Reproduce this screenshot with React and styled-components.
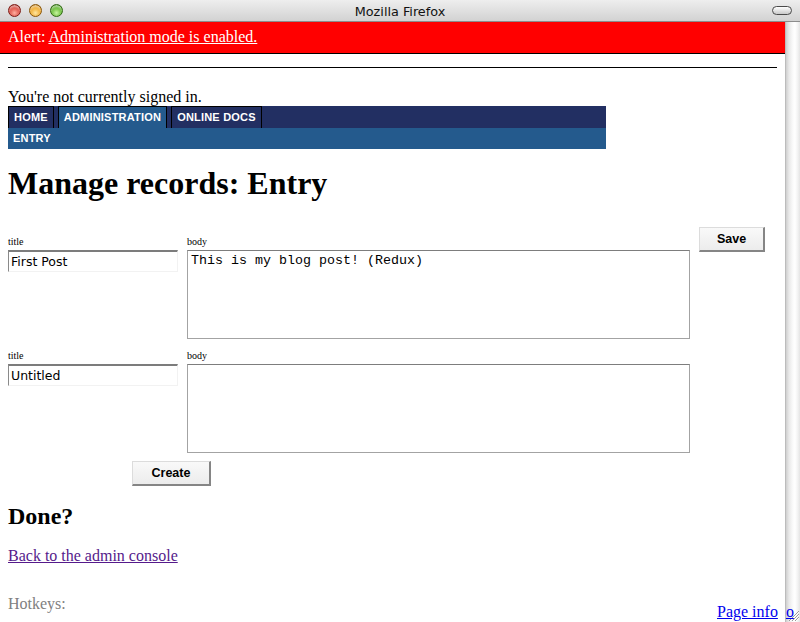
import React from 'react'
import styled, { createGlobalStyle } from 'styled-components'

const GlobalStyle = createGlobalStyle`
  html, body {
    margin: 0;
    padding: 0;
    background: #fff;
  }
`;

const Window = styled.div`
  position: relative;
  width: 800px;
  height: 622px;
  overflow: hidden;
  background: #fff;
  font-family: "Liberation Serif", "Times New Roman", serif;
`;

const TitleBar = styled.div`
  position: relative;
  height: 21px;
  border-bottom: 1px solid #8c8c8c;
  background: linear-gradient(#eeeeee, #d2d2d2);
  display: flex;
  align-items: center;
  justify-content: center;
`;

const Lights = styled.div`
  position: absolute;
  left: 8px;
  top: 4px;
  display: flex;
  gap: 8px;
`;

const Light = styled.span`
  width: 13px;
  height: 13px;
  border-radius: 50%;
  box-sizing: border-box;
  border: 1px solid ${p => p.$edge};
  background: radial-gradient(circle at 50% 72%, ${p => p.$glow} 0%, ${p => p.$base} 60%, ${p => p.$edge} 100%);
  box-shadow: inset 0 2px 2px rgba(255, 255, 255, 0.55);
`;

const WindowTitle = styled.span`
  font-family: "DejaVu Sans", "Liberation Sans", sans-serif;
  font-size: 12.8px;
  color: #111;
  margin-top: 1px;
`;

const Pill = styled.span`
  position: absolute;
  right: 8px;
  top: 6px;
  width: 20px;
  height: 9px;
  box-sizing: border-box;
  border: 1px solid #4a4a4a;
  border-radius: 5px;
  background: linear-gradient(#ffffff, #c9c9c9);
`;

const Frame = styled.div`
  display: flex;
  height: 600px;
`;

const Viewport = styled.div`
  flex: 1;
  overflow: hidden;
  font-size: 16px;
  line-height: 18px;
  color: #000;
`;

const Scrollbar = styled.div`
  position: relative;
  width: 15px;
  background: linear-gradient(to right, #a9a9a9 0px, #cfcfcf 1px, #e9e9e9 4px, #fbfbfb 8px, #ffffff 10px, #f1f1f1 13px, #e4e4e4 15px);
`;

const Grip = styled.svg`
  position: absolute;
  right: 0;
  bottom: 0;
`;

const AlertBar = styled.div`
  background: #ff0000;
  color: #fff;
  padding: 6px 8px 7px;
  border-bottom: 1px solid #000;
  a {
    color: #fff;
    text-decoration: underline;
  }
`;

const Page = styled.div`
  padding: 0 8px;
`;

const Rule = styled.div`
  height: 1px;
  background: #000;
  margin-top: 13px;
`;

const SignedIn = styled.div`
  margin-top: 19px;
  line-height: 19px;
`;

const Nav = styled.nav`
  width: 598px;
  font-family: "Liberation Sans", Arial, sans-serif;
  font-size: 11px;
  font-weight: bold;
  letter-spacing: 0.2px;
  color: #fff;
`;

const TabRow = styled.div`
  display: flex;
  gap: 4px;
  height: 22px;
  background: #222f62;
`;

const Tab = styled.span`
  padding: 0 5px;
  line-height: 21px;
  border: 1px solid #000;
  border-bottom: none;
  background: ${p => (p.$active ? '#245a8d' : '#222f62')};
`;

const SubRow = styled.div`
  height: 21px;
  line-height: 21px;
  padding: 0 5px;
  background: #245a8d;
`;

const Heading = styled.h1`
  font-size: 32px;
  line-height: 37px;
  font-weight: bold;
  margin: 16px 0 0;
`;

const RecordRow = styled.div`
  display: flex;
  align-items: flex-start;
  gap: 9px;
  margin-top: ${p => p.$top}px;
`;

const Field = styled.div`
  display: flex;
  flex-direction: column;
  gap: 2px;
  padding-top: ${p => p.$pad || 0}px;
`;

const Label = styled.label`
  font-size: 10px;
  line-height: 13px;
`;

const TextInput = styled.input`
  width: 170px;
  height: 22px;
  box-sizing: border-box;
  margin: 0;
  padding: 0 2px;
  border-style: solid;
  border-width: 2px 1px 1px 1px;
  border-color: #7c7c7c #f2f2f2 #f2f2f2 #8a8a8a;
  font-family: "DejaVu Sans", "Liberation Sans", sans-serif;
  font-size: 12.5px;
  color: #000;
  background: #fff;
  outline: none;
`;

const BodyArea = styled.textarea`
  width: 503px;
  height: 89px;
  box-sizing: border-box;
  margin: 0;
  padding: 2px 3px;
  border: 1px solid #a3a3a3;
  border-top-color: #7d7d7d;
  resize: none;
  font-family: "Liberation Mono", "Courier New", monospace;
  font-size: 13.33px;
  line-height: 15px;
  color: #000;
  background: #fff;
  outline: none;
`;

const Button = styled.button`
  width: ${p => p.$w}px;
  height: ${p => p.$h}px;
  margin: 0;
  margin-left: ${p => p.$left || 0}px;
  padding: 0;
  box-sizing: border-box;
  border-style: solid;
  border-width: 1px 2px 2px 1px;
  border-color: #dcdcdc #858585 #858585 #dcdcdc;
  background: linear-gradient(#f9f9f9, #ececec);
  font-family: "Liberation Sans", Arial, sans-serif;
  font-size: 12.5px;
  font-weight: bold;
  color: #000;
`;

const CreateWrap = styled.div`
  margin-top: 8px;
`;

const SubHeading = styled.h2`
  font-size: 24px;
  line-height: 28px;
  font-weight: bold;
  margin: 16px 0 0;
`;

const BackLink = styled.a`
  display: block;
  margin-top: 17px;
  color: #551a8b;
  text-decoration: underline;
`;

const Hotkeys = styled.div`
  margin-top: 30px;
  color: #808080;
`;

const FooterLinks = styled.div`
  position: absolute;
  left: 717px;
  top: 603px;
  display: flex;
  gap: 8px;
  white-space: nowrap;
  font-size: 16px;
  line-height: 18px;
  a {
    color: #0000ee;
    text-decoration: underline;
  }
`;

const records = [
  { title: 'First Post', body: 'This is my blog post! (Redux)' },
]

const App = () => {
  return (
    <Window>
      <GlobalStyle />
      <TitleBar>
        <Lights>
          <Light $base="#d8443a" $glow="#ffb0a0" $edge="#7d1b14" />
          <Light $base="#eea524" $glow="#ffe6a0" $edge="#8a5608" />
          <Light $base="#5db52c" $glow="#c8f5a0" $edge="#2f6a12" />
        </Lights>
        <WindowTitle>Mozilla Firefox</WindowTitle>
        <Pill />
      </TitleBar>
      <Frame>
        <Viewport>
          <AlertBar>
            Alert: <a href="#admin">Administration mode is enabled.</a>
          </AlertBar>
          <Page>
            <Rule />
            <SignedIn>You're not currently signed in.</SignedIn>
            <Nav>
              <TabRow>
                <Tab>HOME</Tab>
                <Tab $active>ADMINISTRATION</Tab>
                <Tab>ONLINE DOCS</Tab>
              </TabRow>
              <SubRow>ENTRY</SubRow>
            </Nav>
            <Heading>Manage records: Entry</Heading>

            {records.map(r => (
              <RecordRow key={r.title} $top={25}>
                <Field $pad={8}>
                  <Label>title</Label>
                  <TextInput defaultValue={r.title} />
                </Field>
                <Field $pad={8}>
                  <Label>body</Label>
                  <BodyArea defaultValue={r.body} />
                </Field>
                <Button $w={66} $h={25}>Save</Button>
              </RecordRow>
            ))}

            <RecordRow $top={10}>
              <Field>
                <Label>title</Label>
                <TextInput defaultValue="Untitled" />
              </Field>
              <Field>
                <Label>body</Label>
                <BodyArea defaultValue="" />
              </Field>
            </RecordRow>
            <CreateWrap>
              <Button $w={79} $h={25} $left={124}>Create</Button>
            </CreateWrap>

            <SubHeading>Done?</SubHeading>
            <BackLink href="#console">Back to the admin console</BackLink>
            <Hotkeys>Hotkeys:</Hotkeys>
          </Page>
        </Viewport>
        <Scrollbar>
          <Grip width="13" height="13" viewBox="0 0 13 13">
            <path d="M2 12 L12 2 M5 12 L12 5 M8 12 L12 8" stroke="#9a9a9a" strokeWidth="1" />
            <path d="M3 12 L12 3 M6 12 L12 6 M9 12 L12 9" stroke="#ffffff" strokeWidth="1" />
          </Grip>
        </Scrollbar>
      </Frame>
      <FooterLinks>
        <a href="#info">Page info</a>
        <a href="#o">o</a>
      </FooterLinks>
    </Window>
  )
}

export default App
